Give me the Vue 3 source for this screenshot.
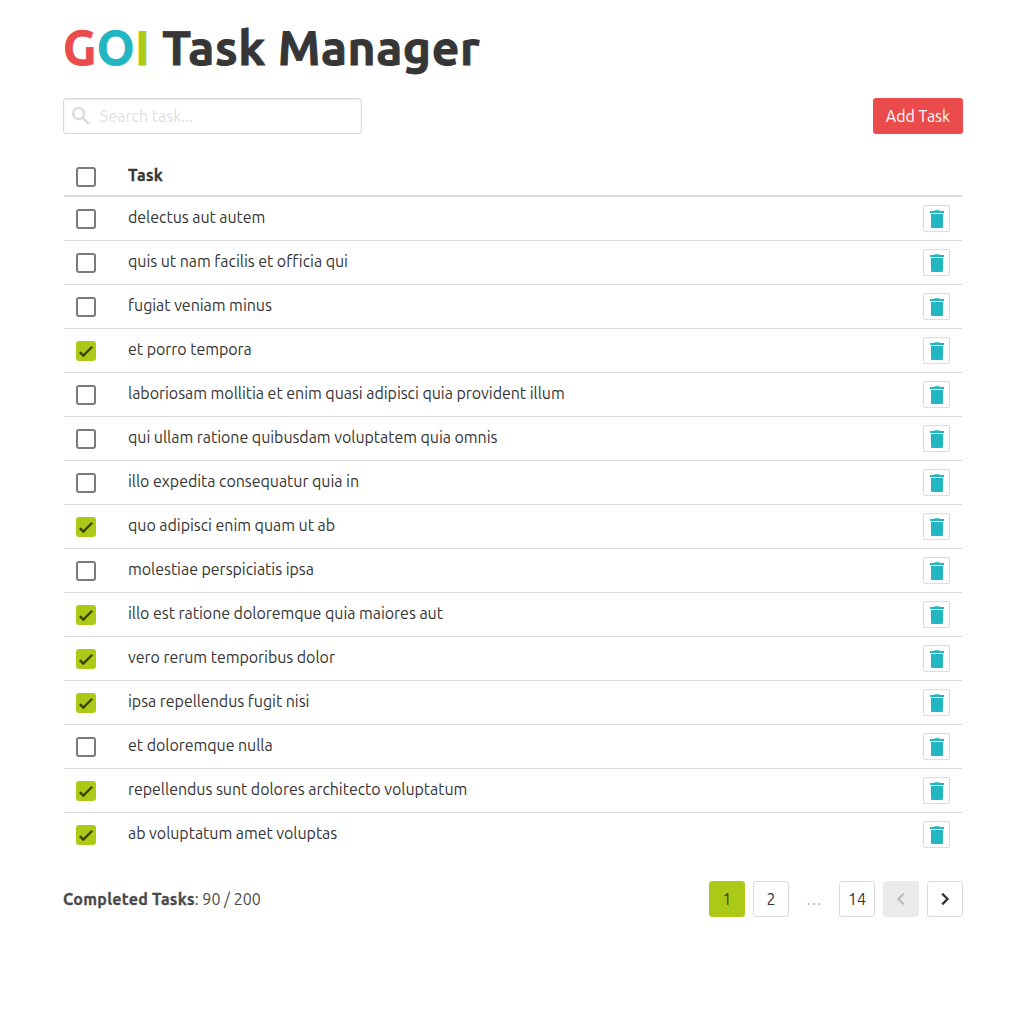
<script setup>
import { ref } from 'vue'

const tasks = ref([
  { title: 'delectus aut autem', done: false },
  { title: 'quis ut nam facilis et officia qui', done: false },
  { title: 'fugiat veniam minus', done: false },
  { title: 'et porro tempora', done: true },
  { title: 'laboriosam mollitia et enim quasi adipisci quia provident illum', done: false },
  { title: 'qui ullam ratione quibusdam voluptatem quia omnis', done: false },
  { title: 'illo expedita consequatur quia in', done: false },
  { title: 'quo adipisci enim quam ut ab', done: true },
  { title: 'molestiae perspiciatis ipsa', done: false },
  { title: 'illo est ratione doloremque quia maiores aut', done: true },
  { title: 'vero rerum temporibus dolor', done: true },
  { title: 'ipsa repellendus fugit nisi', done: true },
  { title: 'et doloremque nulla', done: false },
  { title: 'repellendus sunt dolores architecto voluptatum', done: true },
  { title: 'ab voluptatum amet voluptas', done: true },
])
</script>

<template>
  <main class="page">
    <h1 class="title"><span class="red">G</span><span class="teal">O</span><span class="lime">I</span> Task Manager</h1>

    <div class="toolbar">
      <label class="search">
        <svg viewBox="0 0 24 24" width="24" height="24"><path fill="currentColor" stroke="currentColor" stroke-width=".4" d="M9.5 3A6.5 6.5 0 0 1 16 9.5c0 1.61-.59 3.09-1.56 4.23l.27.27h.79l5 5-1.5 1.5-5-5v-.79l-.27-.27A6.516 6.516 0 0 1 9.5 16a6.5 6.5 0 0 1 0-13m0 2C7 5 5 7 5 9.5S7 14 9.5 14 14 12 14 9.5 12 5 9.5 5z" /></svg>
        <input type="text" placeholder="Search task..." />
      </label>
      <button class="add">Add Task</button>
    </div>

    <div class="table">
      <div class="row head">
        <span class="check"></span>
        <span class="name">Task</span>
      </div>
      <div v-for="task in tasks" :key="task.title" class="row">
        <span class="check" :class="{ checked: task.done }" @click="task.done = !task.done">
          <svg v-if="task.done" viewBox="0 0 1 1" width="20" height="20"><path fill="#36400a" d="M0.04038059,0.6267767 0.14644661,0.52071068 0.42928932,0.80355339 0.3232233,0.90961941z M0.21715729,0.80355339 0.85355339,0.16715729 0.95961941,0.2732233 0.3232233,0.90961941z" transform="translate(.12 .12) scale(.76)" /></svg>
        </span>
        <span class="name">{{ task.title }}</span>
        <button class="trash" aria-label="Delete">
          <svg viewBox="0 0 25 25" width="25" height="25"><path fill="currentColor" d="M6 5h4l.8-.8h4.4L16 5h4v2H6zM7 8h12v12.7q0 1.3-1.3 1.3H8.3Q7 22 7 20.700z" /></svg>
        </button>
      </div>
    </div>

    <footer class="footer">
      <div class="summary"><b>Completed Tasks</b>: 90 / 200</div>
      <nav class="pages">
        <button class="page-link current">1</button>
        <button class="page-link">2</button>
        <span class="dots">…</span>
        <button class="page-link">14</button>
        <button class="page-link disabled" aria-label="Previous">
          <svg viewBox="0 0 24 24" width="24" height="24"><path fill="currentColor" stroke="currentColor" stroke-width=".4" d="M15.41 16.58 10.83 12l4.58-4.59L14 6l-6 6 6 6 1.41-1.42z" /></svg>
        </button>
        <button class="page-link" aria-label="Next">
          <svg viewBox="0 0 24 24" width="24" height="24"><path fill="currentColor" stroke="currentColor" stroke-width=".4" d="M8.59 16.58 13.17 12 8.59 7.41 10 6l6 6-6 6-1.41-1.42z" /></svg>
        </button>
      </nav>
    </footer>
  </main>
</template>

<style>
body { margin: 0; background: #fff; }
</style>

<style scoped>
.page {
  box-sizing: border-box;
  width: 900px;
  margin: 0 auto;
  padding-top: 20px;
  font: 16px/24px Ubuntu, "Noto Sans", sans-serif;
  color: #363636;
}
button, input {
  box-sizing: border-box;
  font: inherit;
  padding: 0;
  margin: 0;
}
svg { display: block; flex: none; }
.title {
  margin: 0 0 24px;
  font-size: 48px;
  line-height: 54px;
  font-weight: 700;
  letter-spacing: 0.57px;
  -webkit-text-stroke: 0.9px currentColor;
  white-space: nowrap;
}
.red { color: #eb4b4b; }
.teal { color: #22b5c2; }
.lime { color: #adc918; }
.toolbar {
  display: flex;
  justify-content: space-between;
  height: 36px;
}
.search {
  box-sizing: border-box;
  display: flex;
  align-items: center;
  gap: 7px;
  width: 299px;
  padding-left: 5px;
  border: 1px solid #dbdbdb;
  border-radius: 3px;
  box-shadow: inset 0 1px 2px rgba(10, 10, 10, 0.1);
  color: #dbdbdb;
}
.search input {
  width: 240px;
  border: 0;
  outline: 0;
  background: transparent;
  color: #363636;
}
.search input::placeholder { color: #e0e0e0; opacity: 1; }
.add {
  width: 90px;
  border: 0;
  border-radius: 3px;
  background: #eb4b4b;
  color: #fff;
}
.table { margin: 21px 1px 0; }
.row {
  box-sizing: border-box;
  display: flex;
  align-items: center;
  height: 44px;
  padding: 0 12px;
  border-bottom: 1px solid #dbdbdb;
}
.row:last-child { border-bottom-color: transparent; }
.head {
  height: 42px;
  border-bottom-width: 2px;
  font-weight: 700;
}
.check {
  box-sizing: border-box;
  width: 20px;
  height: 20px;
  margin-top: 1px;
  border: 2px solid #7a7a7a;
  border-radius: 3px;
}
.head .check { margin-top: 3px; }
.checked { border: 0; background: #adc918; }
.name { flex: 1; margin: -3px 0 0 32px; letter-spacing: -0.05px; }
.head .name { margin-top: 0; letter-spacing: 0.35px; -webkit-text-stroke: 0.3px currentColor; }
.trash {
  display: flex;
  align-items: center;
  justify-content: center;
  width: 27px;
  height: 27px;
  border: 1px solid #dbdbdb;
  border-radius: 2px;
  background: #fff;
  color: #22b5c2;
}
.footer {
  display: flex;
  align-items: center;
  justify-content: space-between;
  margin-top: 24px;
  color: #4a4a4a;
}
.summary b { letter-spacing: 0.27px; -webkit-text-stroke: 0.3px currentColor; }
.pages { display: flex; gap: 8px; }
.page-link {
  display: flex;
  align-items: center;
  justify-content: center;
  width: 36px;
  height: 36px;
  border: 1px solid #dbdbdb;
  border-radius: 3px;
  background: #fff;
  color: #363636;
}
.current { border-color: #adc918; background: #adc918; color: #36400a; }
.disabled { border-color: #ebebeb; background: #ebebeb; color: #bdbdbd; }
.dots { width: 34px; line-height: 36px; text-align: center; color: #b5b5b5; }
</style>
